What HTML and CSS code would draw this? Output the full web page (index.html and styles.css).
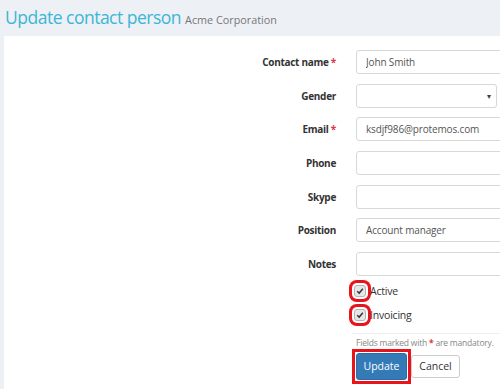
FILE: index.html
```html
<!DOCTYPE html>
<html lang="en">
<head>
    <meta charset="UTF-8">
    <title>Update contact person</title>
    <link rel="stylesheet" href="styles.css">
</head>
<body>
    <h1 class="page-title">Update contact person <small>Acme Corporation</small></h1>

    <div class="panel">
        <form class="contact-form">
            <div class="fields">
                <div class="form-row">
                    <label>Contact name <span class="req">*</span></label>
                    <input type="text" value="John Smith">
                </div>
                <div class="form-row">
                    <label>Gender</label>
                    <div class="select"><span class="caret">&#9662;</span></div>
                </div>
                <div class="form-row">
                    <label>Email <span class="req">*</span></label>
                    <input type="text" value="ksdjf986@protemos.com">
                </div>
                <div class="form-row">
                    <label>Phone</label>
                    <input type="text">
                </div>
                <div class="form-row">
                    <label>Skype</label>
                    <input type="text">
                </div>
                <div class="form-row">
                    <label>Position</label>
                    <input type="text" value="Account manager">
                </div>
                <div class="form-row">
                    <label>Notes</label>
                    <input type="text">
                </div>
            </div>

            <div class="checks">
                <div class="check"><span class="box"><svg viewBox="0 0 10 10" width="8" height="8"><path d="M1.5 5.2 L4 7.6 L8.6 2.2" fill="none" stroke="#333" stroke-width="1.8"/></svg></span>Active</div>
                <div class="check"><span class="box"><svg viewBox="0 0 10 10" width="8" height="8"><path d="M1.5 5.2 L4 7.6 L8.6 2.2" fill="none" stroke="#333" stroke-width="1.8"/></svg></span>Invoicing</div>
            </div>

            <div class="form-footer">
                <p class="hint">Fields marked with <span class="req">*</span> are mandatory.</p>
                <div class="buttons">
                    <span class="highlight"><button type="button" class="btn btn-primary">Update</button></span>
                    <button type="button" class="btn btn-default">Cancel</button>
                </div>
            </div>
        </form>
    </div>
</body>
</html>
```

FILE: styles.css
```css
* {
    margin: 0;
    padding: 0;
    box-sizing: border-box;
}

body {
    font-family: 'Open Sans', Arial, sans-serif;
    background-color: #edf0f5;
    color: #333;
    overflow: hidden;
    height: 389px;
}

/* Page heading */
.page-title {
    font-size: 17.5px;
    font-weight: 400;
    color: #3cb6d6;
    padding: 5px 0 0 5px;
    height: 36px;
    letter-spacing: -0.5px;
    white-space: nowrap;
}

.page-title small {
    font-size: 10.8px;
    color: #777;
    letter-spacing: 0;
}

/* White panel */
.panel {
    background: #fff;
    margin-left: 4px;
    width: 700px;
    height: 400px;
    padding-top: 14px;
}

.fields {
    display: flex;
    flex-direction: column;
    gap: 9.67px;
}

.form-row {
    display: grid;
    grid-template-columns: 332px 200px;
    column-gap: 20px;
    align-items: center;
}

.form-row label {
    text-align: right;
    font-size: 10px;
    font-weight: 700;
    letter-spacing: -0.3px;
    color: #333;
}

.req {
    color: #e0393e;
    font-weight: 700;
}

.form-row input,
.select {
    display: block;
    width: 200px;
    height: 24px;
    border: 1px solid #d8d8d8;
    border-radius: 3px;
    padding: 0 9px;
    font-family: 'Open Sans', Arial, sans-serif;
    font-size: 10px;
    letter-spacing: -0.15px;
    color: #555;
    background: #fff;
}

.select {
    width: 141px;
    position: relative;
}

.caret {
    position: absolute;
    right: 5px;
    top: 5px;
    font-size: 8px;
    color: #444;
}

/* Checkboxes */
.checks {
    padding-left: 350px;
    margin-top: 3px;
}

.check {
    display: flex;
    align-items: center;
    height: 24px;
    font-size: 10.5px;
    letter-spacing: -0.2px;
    color: #333;
}

.check .box {
    display: flex;
    align-items: center;
    justify-content: center;
    width: 12px;
    height: 12px;
    margin-right: 4px;
    background: #e6e6e6;
    border: 1px solid #b5b5b5;
    border-radius: 3px;
    box-shadow: 0 0 0 2px #fff, 0 0 0 5px #e8141b;
}

/* Footer */
.form-footer {
    margin-left: 348px;
    margin-top: 6px;
    border-top: 1px solid #eee;
    padding-top: 3px;
}

.hint {
    font-size: 8.5px;
    line-height: 12px;
    letter-spacing: -0.2px;
    color: #888;
    padding-left: 4px;
    white-space: nowrap;
}

.buttons {
    display: flex;
    align-items: center;
}

.highlight {
    display: inline-block;
    border: 3px solid #e8141b;
    padding: 1px;
}

.btn {
    font-family: 'Open Sans', Arial, sans-serif;
    font-size: 10.5px;
    border-radius: 3px;
    cursor: pointer;
}

.btn-primary {
    display: block;
    background: #337ab7;
    color: #fff;
    border: 1px solid #2e6da4;
    width: 51px;
    height: 27px;
}

.btn-default {
    background: #fff;
    color: #333;
    border: 1px solid #ccc;
    width: 49px;
    height: 23px;
}
```
